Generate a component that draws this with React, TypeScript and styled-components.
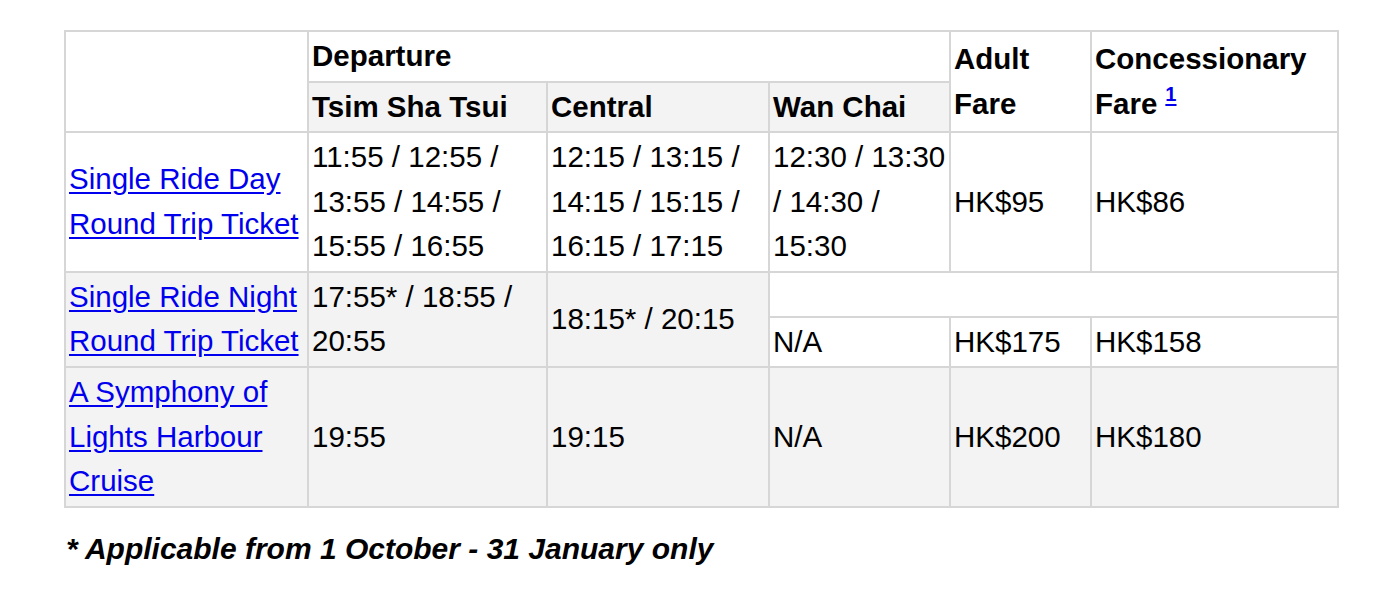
import React from "react";
import styled, { createGlobalStyle } from "styled-components";

const Global = createGlobalStyle`
  html, body { margin: 0; padding: 0; background: #ffffff; }
  body { font-family: "Liberation Sans", Arial, Helvetica, sans-serif; color: #000; }
`;

const Page = styled.div`
  padding: 30px 0 0 64px;
`;

const Table = styled.table`
  border-collapse: collapse;
  table-layout: fixed;
  width: 1275px;
  font-size: 29.5px;
  line-height: 44.5px;
`;

const Col = styled.col<{ $w: number }>`
  width: ${(p) => p.$w}px;
`;

const Head = styled.th<{ $gray?: boolean }>`
  border: 2px solid #d6d6d6;
  padding: 2px 3px;
  text-align: left;
  vertical-align: middle;
  font-weight: bold;
  background: ${(p) => (p.$gray ? "#f3f3f3" : "#ffffff")};
`;

const Cell = styled.td<{ $gray?: boolean }>`
  border: 2px solid #d6d6d6;
  padding: 2px 3px;
  text-align: left;
  vertical-align: middle;
  white-space: normal;
  background: ${(p) => (p.$gray ? "#f3f3f3" : "#ffffff")};
`;

const BlankCell = styled(Cell)`
  height: 39px;
`;

const Link = styled.a`
  color: #0000ee;
  text-decoration: underline;
  text-underline-offset: 3px;
`;

const Sup = styled.sup`
  font-size: 0.68em;
  line-height: 0;
  vertical-align: 0.62em;
  margin-left: 8px;
`;

const Note = styled.p`
  margin: 24px 0 0 2px;
  font-size: 30px;
  font-weight: bold;
  font-style: italic;
`;

export default function App() {
  return (
    <>
      <Global />
      <Page>
        <Table>
          <colgroup>
            <Col $w={243} />
            <Col $w={239} />
            <Col $w={222} />
            <Col $w={181} />
            <Col $w={141} />
            <Col $w={247} />
          </colgroup>
          <tbody>
            <tr>
              <Head rowSpan={2}></Head>
              <Head colSpan={3}>Departure</Head>
              <Head rowSpan={2}>
                Adult
                <br />
                Fare
              </Head>
              <Head rowSpan={2}>
                Concessionary
                <br />
                Fare
                <Sup>
                  <Link href="#">1</Link>
                </Sup>
              </Head>
            </tr>
            <tr>
              <Head $gray>Tsim Sha Tsui</Head>
              <Head $gray>Central</Head>
              <Head $gray>Wan Chai</Head>
            </tr>
            <tr>
              <Cell>
                <Link href="#">Single Ride Day Round Trip Ticket</Link>
              </Cell>
              <Cell>11:55 / 12:55 / 13:55 / 14:55 / 15:55 / 16:55</Cell>
              <Cell>12:15 / 13:15 / 14:15 / 15:15 / 16:15 / 17:15</Cell>
              <Cell>12:30 / 13:30 / 14:30 / 15:30</Cell>
              <Cell>HK$95</Cell>
              <Cell>HK$86</Cell>
            </tr>
            <tr>
              <Cell $gray rowSpan={2}>
                <Link href="#">Single Ride Night Round Trip Ticket</Link>
              </Cell>
              <Cell $gray rowSpan={2}>
                17:55* / 18:55 / 20:55
              </Cell>
              <Cell $gray rowSpan={2}>
                18:15* / 20:15
              </Cell>
              <BlankCell colSpan={3}></BlankCell>
            </tr>
            <tr>
              <Cell>N/A</Cell>
              <Cell>HK$175</Cell>
              <Cell>HK$158</Cell>
            </tr>
            <tr>
              <Cell $gray>
                <Link href="#">A Symphony of Lights Harbour Cruise</Link>
              </Cell>
              <Cell $gray>19:55</Cell>
              <Cell $gray>19:15</Cell>
              <Cell $gray>N/A</Cell>
              <Cell $gray>HK$200</Cell>
              <Cell $gray>HK$180</Cell>
            </tr>
          </tbody>
        </Table>
        <Note>* Applicable from 1 October - 31 January only</Note>
      </Page>
    </>
  );
}
